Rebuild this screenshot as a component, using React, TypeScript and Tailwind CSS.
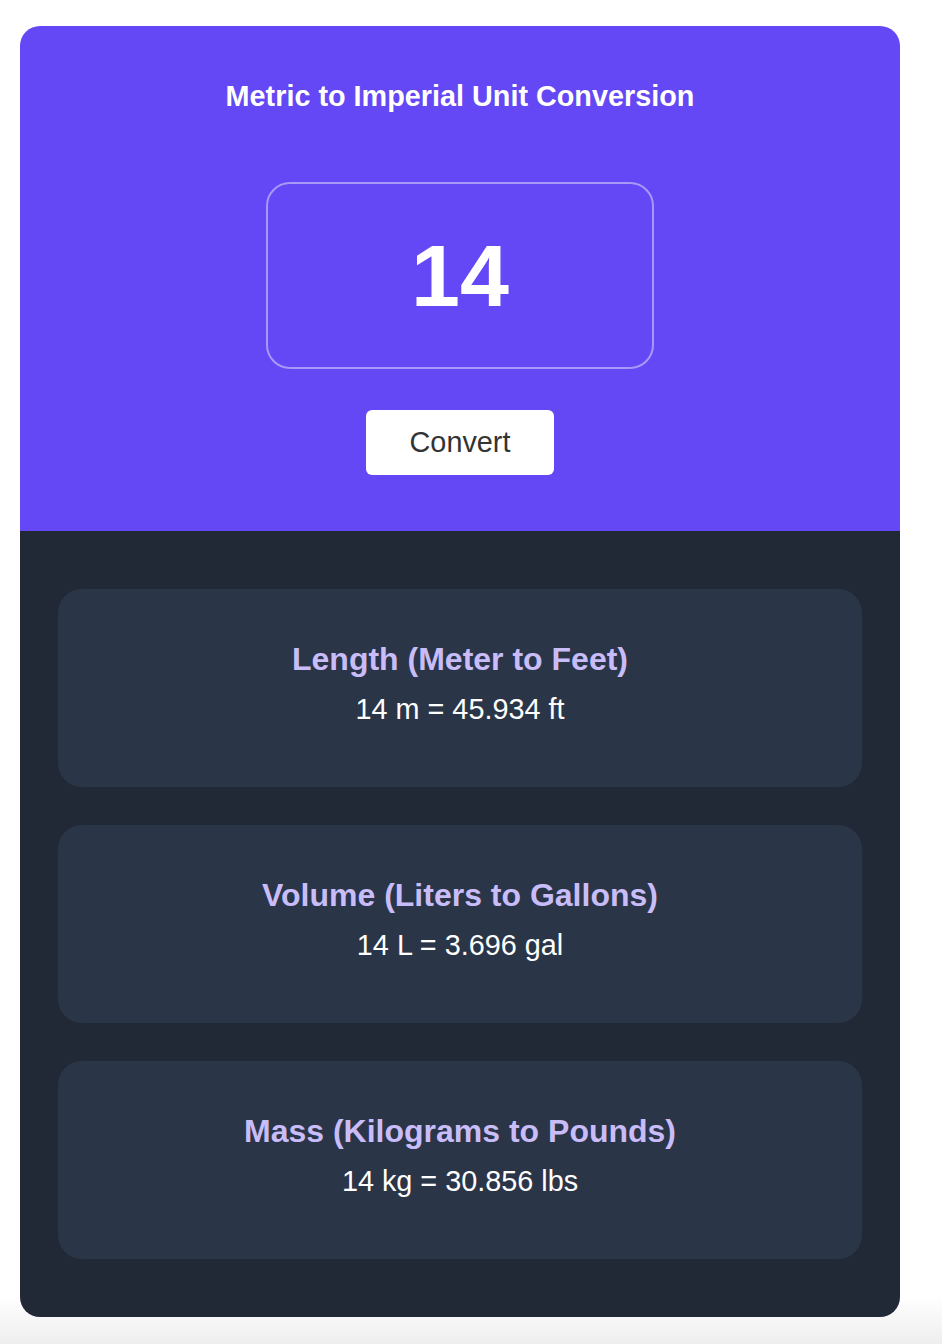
const results = [
  { title: "Length (Meter to Feet)", value: "14 m = 45.934 ft" },
  { title: "Volume (Liters to Gallons)", value: "14 L = 3.696 gal" },
  { title: "Mass (Kilograms to Pounds)", value: "14 kg = 30.856 lbs" },
];

export default function App() {
  return (
    <div className="min-h-[1344px] bg-[linear-gradient(to_bottom,#ffffff_1296px,#eeeeee_1344px)] px-5 pt-[26px] font-['Liberation_Sans',Arial,sans-serif]">
      <div className="w-[880px] overflow-hidden rounded-[20px]">
        <section className="flex h-[505px] flex-col items-center bg-[#6447f5] pt-[53px]">
          <h1 className="text-[28.8px] leading-[34px] font-bold text-white">
            Metric to Imperial Unit Conversion
          </h1>
          <div className="mt-[69px] flex h-[187px] w-[388px] items-center justify-center rounded-[24px] border-2 border-[#a898f8]">
            <span className="text-[88px] leading-none font-bold text-white">14</span>
          </div>
          <button className="mt-[41px] h-[65px] w-[188px] rounded-md bg-white text-[28.8px] text-[#333333]">
            Convert
          </button>
        </section>
        <section className="flex flex-col gap-[38px] bg-[#222936] px-[38px] py-[58px]">
          {results.map((r) => (
            <div
              key={r.title}
              className="flex h-[198px] flex-col items-center rounded-[24px] bg-[#2b3548] pt-[51px]"
            >
              <h2 className="text-[32px] leading-[38px] font-bold text-[#c8bdf8]">{r.title}</h2>
              <p className="mt-[14px] text-[28.8px] leading-[34px] text-white">{r.value}</p>
            </div>
          ))}
        </section>
      </div>
    </div>
  );
}
